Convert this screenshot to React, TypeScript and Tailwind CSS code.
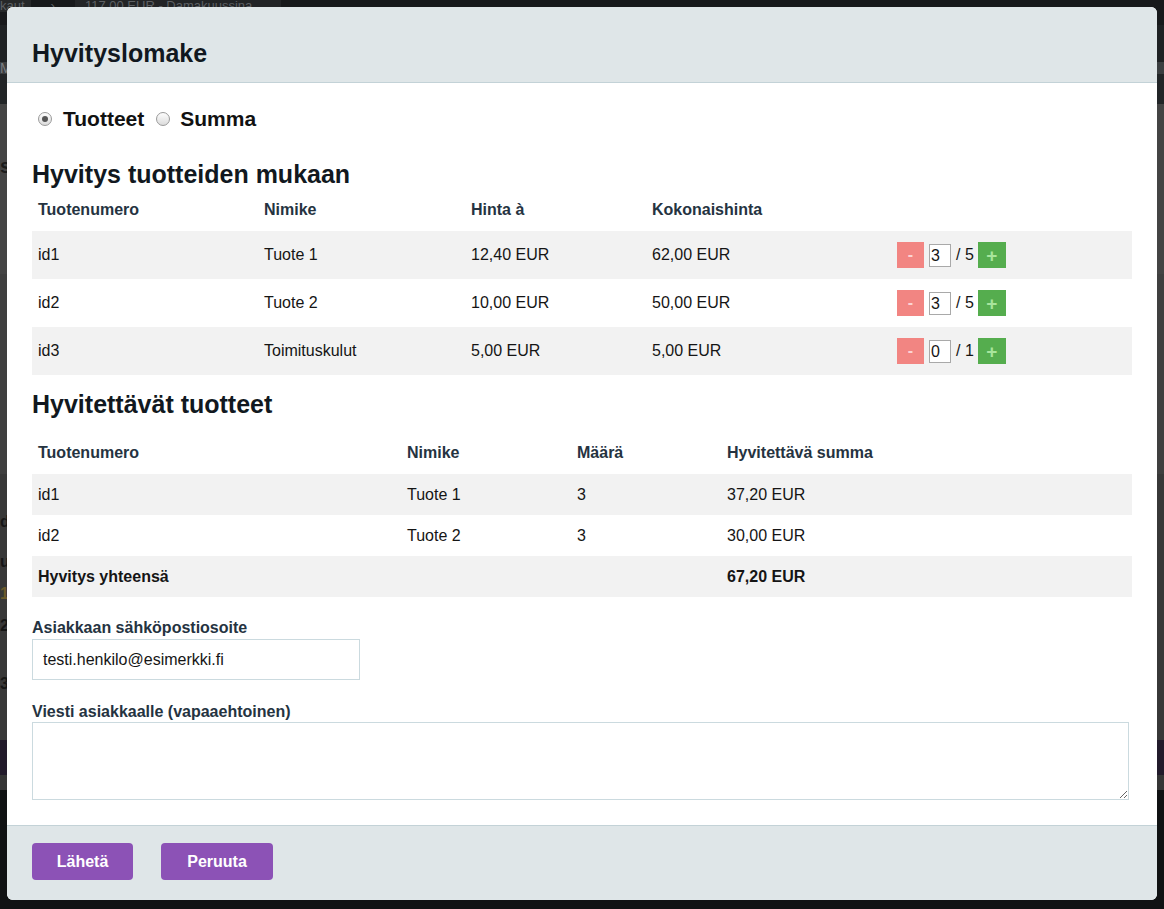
import React from 'react';

type Product = { id: string; name: string; price: string; total: string; qty: number; max: number };

const products: Product[] = [
  { id: 'id1', name: 'Tuote 1', price: '12,40 EUR', total: '62,00 EUR', qty: 3, max: 5 },
  { id: 'id2', name: 'Tuote 2', price: '10,00 EUR', total: '50,00 EUR', qty: 3, max: 5 },
  { id: 'id3', name: 'Toimituskulut', price: '5,00 EUR', total: '5,00 EUR', qty: 0, max: 1 },
];

const refunds = [
  { id: 'id1', name: 'Tuote 1', qty: 3, sum: '37,20 EUR' },
  { id: 'id2', name: 'Tuote 2', qty: 3, sum: '30,00 EUR' },
];

function Radio({ checked }: { checked?: boolean }) {
  return (
    <span className="w-[14px] h-[14px] rounded-full border border-[#9a9a9a] bg-gradient-to-b from-[#fdfdfd] to-[#dcdcdc] flex items-center justify-center">
      {checked && <span className="w-[6px] h-[6px] rounded-full bg-[#555]" />}
    </span>
  );
}

function QtyControl({ qty, max }: { qty: number; max: number }) {
  return (
    <div className="flex items-center">
      <button className="w-[27px] h-[26px] bg-[#f28582] text-[#fcd3d3] font-bold text-[16px] leading-none flex items-center justify-center">
        -
      </button>
      <div className="ml-[5px] w-[22px] h-[23px] border border-[#a9a9a9] bg-white text-[16px] leading-[21px] pl-[1px]">
        {qty}
      </div>
      <span className="ml-[5px] text-[16px]">/ {max}</span>
      <button className="ml-[4px] w-[28px] h-[26px] bg-[#55ad4e] text-[#a8e59c] font-bold text-[19px] leading-none flex items-center justify-center">
        +
      </button>
    </div>
  );
}

export default function App() {
  return (
    <div className="relative w-full h-[909px] overflow-hidden bg-[#101213] font-['Liberation_Sans',Arial,sans-serif]">
      {/* dimmed page behind the modal */}
      <div className="flex flex-col">
        <div className="h-[25px] flex items-start bg-[#17191b] text-[13px] text-[#5d6064] leading-[12px]">
          <div className="h-[12px] bg-[#262829] pr-[6px]">kaut</div>
          <div className="h-[12px] px-[20px]">›</div>
          <div className="h-[12px] bg-[#222426] w-[206px] px-[10px]">117,00 EUR - Damakuussina</div>
        </div>
        <div className="h-[37px] bg-[#1e2123]" />
        <div className="h-[12px] bg-[#3b3e40] text-[#7a7d80] text-[14px] leading-[12px]">M</div>
        <div className="h-[30px] bg-[#222527]" />
        <div className="h-[170px] bg-[#444444] text-[#1b1b1b] font-bold text-[20px] pt-[52px] leading-none">s</div>
        <div className="h-[200px] bg-[#3f3f3f]" />
        <div className="h-[266px] bg-[#383838] text-[#161616] font-bold text-[16px] pt-[32px] leading-[32px]">
          <div className="h-[40px]">d</div>
          <div className="h-[32px]">u</div>
          <div className="h-[32px] text-[#6b5a2a]">1</div>
          <div className="h-[58px]">2</div>
          <div>3</div>
        </div>
        <div className="h-[35px] bg-[#221b2b]" />
        <div className="h-[15px] bg-[#353535]" />
      </div>

      {/* modal */}
      <div className="absolute left-[7px] top-[7px] w-[1150px] h-[893px] rounded-[6px] overflow-hidden bg-white flex flex-col text-[#151515]">
        <div className="bg-[#dfe6e8] border-b border-[#c3d2d7] pl-[25px] pt-[32px] pb-[15px]">
          <h1 className="text-[25px] leading-[28px] font-bold text-[#111820]">Hyvityslomake</h1>
        </div>

        <div className="flex-1 px-[25px] pt-[24px]">
          <div className="flex items-center h-[24px] text-[21px] font-bold text-[#111]">
            <span className="ml-[6px]"><Radio checked /></span>
            <span className="ml-[11px]">Tuotteet</span>
            <span className="ml-[12px]"><Radio /></span>
            <span className="ml-[10px]">Summa</span>
          </div>

          <h2 className="mt-[29px] text-[25px] leading-[28px] font-bold text-[#111820]">Hyvitys tuotteiden mukaan</h2>
          <table className="mt-[5px] w-[1100px] table-fixed border-collapse text-[16px]">
            <thead>
              <tr className="text-left font-bold text-[#253341]">
                <th className="w-[226px] pl-[6px] pt-[8px] pb-[12px] leading-[18px]">Tuotenumero</th>
                <th className="w-[207px] pl-[6px] pt-[8px] pb-[12px] leading-[18px]">Nimike</th>
                <th className="w-[181px] pl-[6px] pt-[8px] pb-[12px] leading-[18px]">Hinta à</th>
                <th className="w-[245px] pl-[6px] pt-[8px] pb-[12px] leading-[18px]">Kokonaishinta</th>
                <th className="pl-[6px] pt-[8px] pb-[12px] leading-[18px]"></th>
              </tr>
            </thead>
            <tbody>
              {products.map((p, i) => (
                <tr key={p.id} className={i % 2 === 0 ? 'bg-[#f2f2f2] h-[48px]' : 'bg-white h-[48px]'}>
                  <td className="pl-[6px]">{p.id}</td>
                  <td className="pl-[6px]">{p.name}</td>
                  <td className="pl-[6px]">{p.price}</td>
                  <td className="pl-[6px]">{p.total}</td>
                  <td className="pl-[6px]"><QtyControl qty={p.qty} max={p.max} /></td>
                </tr>
              ))}
            </tbody>
          </table>

          <h2 className="mt-[15px] text-[25px] leading-[28px] font-bold text-[#111820]">Hyvitettävät tuotteet</h2>
          <table className="mt-[18px] w-[1100px] table-fixed border-collapse text-[16px]">
            <thead>
              <tr className="text-left font-bold text-[#253341]">
                <th className="w-[369px] pl-[6px] pt-[8px] pb-[12px] leading-[18px]">Tuotenumero</th>
                <th className="w-[170px] pl-[6px] pt-[8px] pb-[12px] leading-[18px]">Nimike</th>
                <th className="w-[150px] pl-[6px] pt-[8px] pb-[12px] leading-[18px]">Määrä</th>
                <th className="pl-[6px] pt-[8px] pb-[12px] leading-[18px]">Hyvitettävä summa</th>
              </tr>
            </thead>
            <tbody>
              {refunds.map((r, i) => (
                <tr key={r.id} className={i % 2 === 0 ? 'bg-[#f2f2f2] h-[41px]' : 'bg-white h-[41px]'}>
                  <td className="pl-[6px]">{r.id}</td>
                  <td className="pl-[6px]">{r.name}</td>
                  <td className="pl-[6px]">{r.qty}</td>
                  <td className="pl-[6px]">{r.sum}</td>
                </tr>
              ))}
              <tr className="bg-[#f2f2f2] h-[41px] font-bold">
                <td className="pl-[6px]">Hyvitys yhteensä</td>
                <td></td>
                <td></td>
                <td className="pl-[6px]">67,20 EUR</td>
              </tr>
            </tbody>
          </table>

          <label className="block mt-[22px] text-[16px] leading-[18px] font-bold text-[#253341]">Asiakkaan sähköpostiosoite</label>
          <input
            className="mt-[2px] block w-[328px] h-[41px] border border-[#cbdadf] px-[10px] text-[16px] text-[#151515] outline-none"
            defaultValue="testi.henkilo@esimerkki.fi"
          />

          <label className="block mt-[23px] text-[16px] leading-[18px] font-bold text-[#253341]">Viesti asiakkaalle (vapaaehtoinen)</label>
          <textarea className="mt-[1px] block w-[1097px] h-[78px] border border-[#cbdadf] outline-none" />
        </div>

        <div className="bg-[#dfe6e8] border-t border-[#c3d2d7] pl-[25px] pt-[17px] pb-[20px] flex gap-[28px]">
          <button className="w-[101px] h-[37px] rounded-[4px] bg-[#8c52b6] text-white font-bold text-[16px]">Lähetä</button>
          <button className="w-[112px] h-[37px] rounded-[4px] bg-[#8c52b6] text-white font-bold text-[16px]">Peruuta</button>
        </div>
      </div>
    </div>
  );
}
